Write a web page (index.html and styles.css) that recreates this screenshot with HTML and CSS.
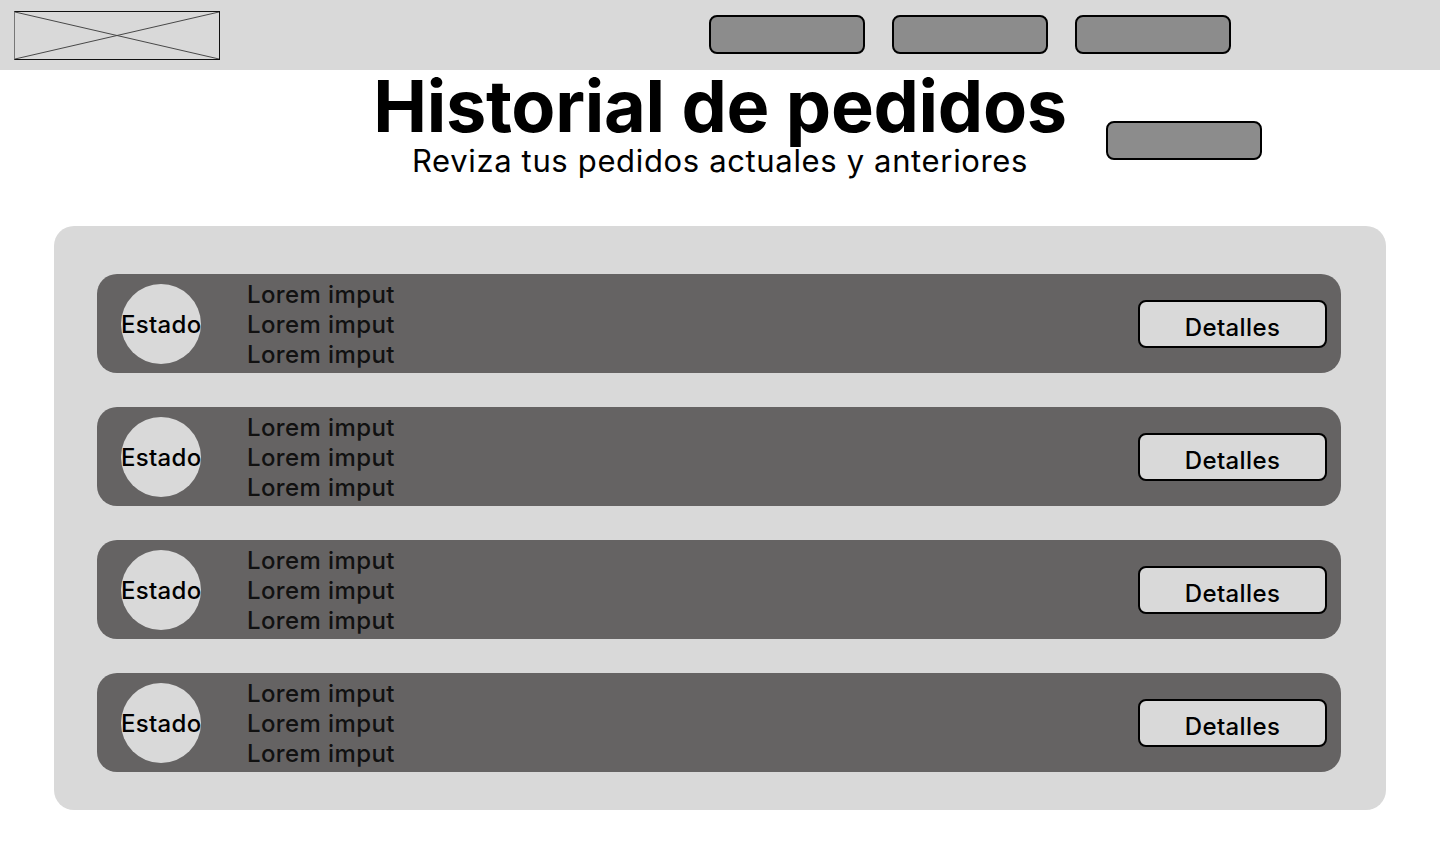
FILE: index.html
```html
<!DOCTYPE html>
<html lang="es">
<head>
<meta charset="utf-8">
<title>Historial de pedidos</title>
<link rel="stylesheet" href="styles.css">
</head>
<body>
<header class="topbar">
  <div class="logo">
    <svg class="logo-x" viewBox="0 0 206 49" preserveAspectRatio="none">
      <line x1="0" y1="0" x2="206" y2="49"/>
      <line x1="0" y1="49" x2="206" y2="0"/>
    </svg>
  </div>
  <nav class="nav">
    <button class="nav-btn" type="button"></button>
    <button class="nav-btn" type="button"></button>
    <button class="nav-btn" type="button"></button>
  </nav>
</header>

<section class="hero">
  <div class="hero-side"></div>
  <div class="hero-text">
    <h1 class="title">Historial de pedidos</h1>
    <p class="subtitle">Reviza tus pedidos actuales y anteriores</p>
  </div>
  <div class="hero-side hero-right">
    <button class="nav-btn hero-btn" type="button"></button>
  </div>
</section>

<main class="orders">
  <div class="order">
    <div class="status"><span>Estado</span></div>
    <div class="lines"><span>Lorem imput</span><span>Lorem imput</span><span>Lorem imput</span></div>
    <button class="details" type="button">Detalles</button>
  </div>
  <div class="order">
    <div class="status"><span>Estado</span></div>
    <div class="lines"><span>Lorem imput</span><span>Lorem imput</span><span>Lorem imput</span></div>
    <button class="details" type="button">Detalles</button>
  </div>
  <div class="order">
    <div class="status"><span>Estado</span></div>
    <div class="lines"><span>Lorem imput</span><span>Lorem imput</span><span>Lorem imput</span></div>
    <button class="details" type="button">Detalles</button>
  </div>
  <div class="order">
    <div class="status"><span>Estado</span></div>
    <div class="lines"><span>Lorem imput</span><span>Lorem imput</span><span>Lorem imput</span></div>
    <button class="details" type="button">Detalles</button>
  </div>
</main>
</body>
</html>
```

FILE: styles.css
```css
* { box-sizing: border-box; }

body {
  margin: 0;
  background: #ffffff;
  font-family: Inter, "Noto Sans", sans-serif;
  color: #000;
}

.topbar {
  height: 70px;
  background: #d9d9d9;
  display: flex;
  align-items: flex-start;
}

.logo {
  margin: 11px 0 0 14px;
  width: 206px;
  height: 49px;
  border: 1px solid #111;
  border-left-color: #777;
  display: flex;
}

.logo-x {
  width: 100%;
  height: 100%;
}

.logo-x line {
  stroke: #444;
  stroke-width: 1;
}

.nav {
  display: flex;
  gap: 27px;
  margin: 15px 0 0 489px;
}

.nav-btn {
  width: 156px;
  height: 39px;
  background: #8c8c8c;
  border: 2px solid #000;
  border-radius: 8px;
  padding: 0;
}

.hero {
  display: grid;
  grid-template-columns: 1fr auto 1fr;
}

.hero-text {
  text-align: center;
}

.title {
  margin: 0;
  font-size: 72px;
  line-height: 72px;
  font-weight: 700;
  letter-spacing: -0.3px;
}

.subtitle {
  margin: 3px 0 0;
  font-size: 31px;
  line-height: 32px;
  font-weight: 400;
  letter-spacing: 0.65px;
}

.hero-right {
  padding: 51px 0 0 39px;
}

.orders {
  margin: 49px 54px 0;
  background: #d9d9d9;
  border-radius: 20px;
  padding: 48px 45px 38px 43px;
  display: flex;
  flex-direction: column;
  gap: 34px;
}

.order {
  height: 99px;
  background: #656363;
  border-radius: 20px;
  display: flex;
  align-items: center;
  padding: 0 14px 0 24px;
}

.status {
  width: 80px;
  height: 80px;
  border-radius: 50%;
  background: #d9d9d9;
  display: flex;
  align-items: center;
  font-size: 24px;
  font-weight: 500;
  letter-spacing: 0.3px;
  line-height: 30px;
  white-space: nowrap;
  flex-shrink: 0;
}

.status span {
  margin-top: 2px;
}

.lines {
  margin-left: 46px;
  padding-top: 3px;
  display: flex;
  flex-direction: column;
  font-size: 24px;
  font-weight: 500;
  letter-spacing: 0.4px;
  line-height: 30px;
  color: #111;
}

.details {
  margin-left: auto;
  width: 189px;
  height: 48px;
  background: #d9d9d9;
  border: 2px solid #000;
  border-radius: 8px;
  font-family: Inter, "Noto Sans", sans-serif;
  font-size: 24px;
  font-weight: 500;
  letter-spacing: 0.4px;
  padding: 8px 0 0;
  color: #000;
}
```
